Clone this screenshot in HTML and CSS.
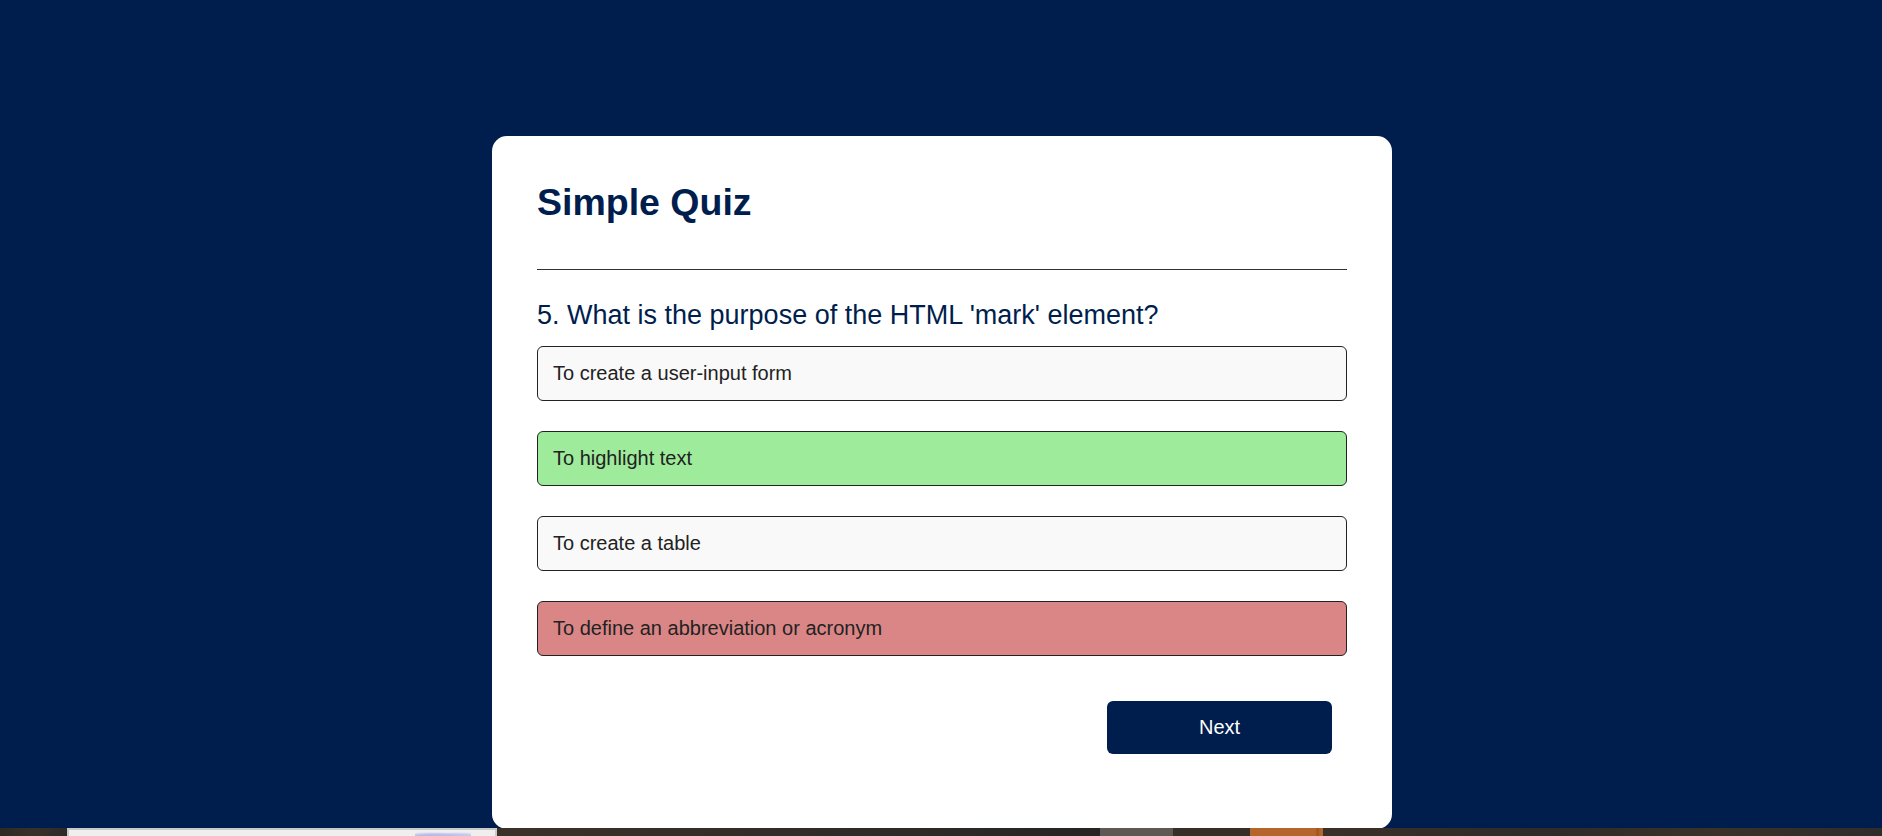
FILE: index.html
```html
<!DOCTYPE html>
<html lang="en">
<head>
<meta charset="utf-8">
<title>Simple Quiz</title>
<link rel="stylesheet" href="styles.css">
</head>
<body>
<div class="app">
  <h1 class="title">Simple Quiz</h1>
  <div class="quiz">
    <h2 class="question">5. What is the purpose of the HTML 'mark' element?</h2>
    <div class="answers">
      <button class="btn">To create a user-input form</button>
      <button class="btn correct">To highlight text</button>
      <button class="btn">To create a table</button>
      <button class="btn incorrect">To define an abbreviation or acronym</button>
    </div>
    <div class="next-row">
      <button class="next-btn">Next</button>
    </div>
  </div>
</div>
<div class="taskbar">
  <div class="tb-dark tb-start"></div>
  <div class="tb-window">
    <span class="tb-icon"></span>
  </div>
  <div class="tb-dark tb-mid"></div>
  <div class="tb-gray"></div>
  <div class="tb-dark tb-gap"></div>
  <div class="tb-orange"></div>
  <div class="tb-dark tb-end"></div>
</div>
</body>
</html>
```

FILE: styles.css
```css
* {
  box-sizing: border-box;
  margin: 0;
  padding: 0;
}

html, body {
  height: 100%;
}

body {
  background: #001e4d;
  font-family: "Liberation Sans", Arial, sans-serif;
  overflow: hidden;
  padding-left: 2px;
}

.app {
  background: #ffffff;
  width: 900px;
  margin: 136px auto 0;
  border-radius: 15px;
  padding: 45px;
}

.title {
  font-size: 37.5px;
  font-weight: 700;
  color: #001e4d;
  line-height: 43px;
  padding-bottom: 45px;
  border-bottom: 1px solid #333333;
}

.quiz {
  padding: 30px 0;
}

.question {
  font-size: 27px;
  font-weight: 400;
  color: #001e4d;
  line-height: 31px;
}

.answers {
  display: flex;
  flex-direction: column;
}

.btn {
  display: block;
  width: 100%;
  background: #f9f9f9;
  color: #222222;
  font-family: "Liberation Sans", Arial, sans-serif;
  font-size: 20px;
  line-height: 23px;
  text-align: left;
  border: 1px solid #222222;
  border-radius: 6px;
  padding: 15px;
  margin: 15px 0;
}

.btn.correct {
  background: #9deb9b;
}

.btn.incorrect {
  background: #db8686;
}

.next-row {
  display: flex;
  justify-content: flex-end;
  padding-top: 30px;
  padding-right: 15px;
}

.next-btn {
  width: 225px;
  background: #001e4d;
  color: #ffffff;
  font-family: "Liberation Sans", Arial, sans-serif;
  font-size: 20px;
  line-height: 23px;
  border: 0;
  border-radius: 6px;
  padding: 15px;
}

.taskbar {
  position: fixed;
  left: 0;
  right: 0;
  bottom: 0;
  height: 8px;
  display: flex;
  background: #2f2a26;
}

.tb-dark {
  background: linear-gradient(90deg, #2d2925, #3a302a 50%, #2c2a27);
}

.tb-start {
  width: 67px;
}

.tb-window {
  width: 430px;
  background: #efefef;
  border-top: 2px solid #c9c9c9;
  border-left: 2px solid #c9c9c9;
  border-right: 2px solid #c9c9c9;
  position: relative;
}

.tb-icon {
  position: absolute;
  left: 346px;
  top: 1px;
  width: 56px;
  height: 6px;
  background: radial-gradient(ellipse at 30% 100%, #b9bce8 30%, transparent 60%),
              radial-gradient(ellipse at 75% 100%, #c4c7ee 30%, transparent 60%);
}

.tb-mid {
  width: 603px;
  background: linear-gradient(90deg, #3b3129, #2d2a28 70%, #262524);
}

.tb-gray {
  width: 73px;
  background: #5f5954;
}

.tb-gap {
  width: 77px;
  background: #382e28;
}

.tb-orange {
  width: 73px;
  background: linear-gradient(90deg, #b4652b 90%, #9a5220 92%, #b4652b 96%);
}

.tb-end {
  flex: 1;
  background: linear-gradient(90deg, #3a3028, #2e2b28 40%, #3b3129 70%, #2e2c2a);
}
```
